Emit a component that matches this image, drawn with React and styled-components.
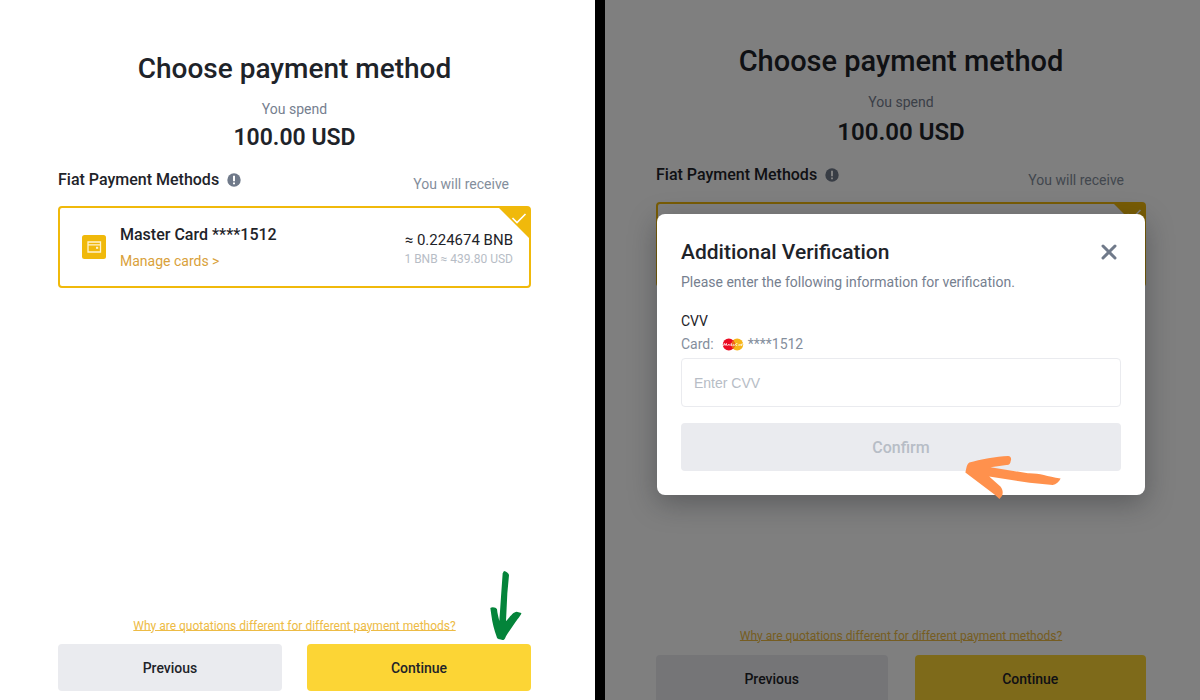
import { useState } from 'react';
import styled, { createGlobalStyle } from 'styled-components';

const GlobalStyle = createGlobalStyle`
  * {
    box-sizing: border-box;
  }
  body {
    margin: 0;
    background: #fff;
    font-family: Roboto, 'Liberation Sans', sans-serif;
    font-size: 14px;
    line-height: 20px;
    color: #1e2329;
  }
  h1, h2, h3, p {
    margin: 0;
  }
  button, input {
    font-family: inherit;
  }
`;

const Page = styled.div`
  display: grid;
  grid-template-columns: 1fr 10px 1fr;
  height: 100vh;
  overflow: hidden;
`;

const Divider = styled.div`
  background: #000;
`;

const Panel = styled.section`
  position: relative;
  min-width: 0;
  overflow: hidden;
`;

const Content = styled.div`
  padding: ${({ $large }) => ($large ? '43px 54px 0 51px' : '51px 64px 0 58px')};
`;

const Title = styled.h1`
  text-align: center;
  font-size: ${({ $large }) => ($large ? '29px' : '28px')};
  line-height: 36px;
  font-weight: 500;
`;

const SpendLabel = styled.p`
  margin-top: ${({ $large }) => ($large ? '13px' : '12px')};
  text-align: center;
  color: #76808f;
`;

const Amount = styled.p`
  margin-top: ${({ $large }) => ($large ? '5px' : '4px')};
  text-align: center;
  font-size: ${({ $large }) => ($large ? '24px' : '23px')};
  line-height: 30px;
  font-weight: 600;
`;

const MethodsRow = styled.div`
  display: flex;
  justify-content: space-between;
  height: 28px;
  margin-top: ${({ $large }) => ($large ? '15px' : '13px')};
`;

const MethodsTitle = styled.h2`
  display: flex;
  align-items: center;
  gap: 8px;
  height: ${({ $large }) => ($large ? '26px' : '28px')};
  font-size: 16px;
  font-weight: 500;
`;

const Receive = styled.span`
  align-self: flex-end;
  padding-right: 22px;
  color: #848e9c;
`;

const Method = styled.div`
  position: relative;
  display: flex;
  align-items: center;
  gap: 14px;
  height: ${({ $large }) => ($large ? '85px' : '82px')};
  margin-top: 12px;
  padding: 0 16px 0 22px;
  border: 2px solid #f0b90b;
  border-radius: 4px;
`;

const MethodInfo = styled.div`
  flex: 1;
`;

const MethodName = styled.h3`
  font-size: 16px;
  line-height: 24px;
  font-weight: 500;
`;

const ManageLink = styled.a`
  display: block;
  margin-top: 4px;
  color: #d9a13a;
  text-decoration: none;
`;

const MethodPrice = styled.div`
  padding-top: 4px;
  text-align: right;
  font-size: 15px;
  line-height: 20px;
`;

const Rate = styled.p`
  font-size: 12px;
  line-height: 18px;
  color: #b7bdc6;
`;

const Selected = styled.svg`
  position: absolute;
  top: -1px;
  right: -1px;
`;

const HelpLink = styled.a`
  display: block;
  margin-top: ${({ $large }) => ($large ? '339px' : '328px')};
  text-align: center;
  font-size: 12px;
  color: #edbb45;
  text-decoration: underline;
  text-underline-offset: 0;
`;

const Actions = styled.div`
  position: relative;
  display: grid;
  grid-template-columns: 1fr 1fr;
  gap: ${({ $large }) => ($large ? '27px' : '25px')};
  margin-top: ${({ $large }) => ($large ? '9px' : '8px')};
`;

const Button = styled.button`
  height: ${({ $large }) => ($large ? '48px' : '47px')};
  border: none;
  border-radius: 4px;
  background: ${({ $primary }) => ($primary ? '#fcd535' : '#eaebef')};
  color: #1e2329;
  font-size: 14px;
  font-weight: 500;
`;

const Overlay = styled.div`
  position: absolute;
  inset: 0;
  padding: 214px 55px 0 52px;
  background: rgba(0, 0, 0, 0.5);
`;

const Modal = styled.div`
  padding: 24px;
  border-radius: 8px;
  background: #fff;
  box-shadow: 0 8px 28px rgba(24, 26, 32, 0.35);
`;

const ModalHeader = styled.div`
  display: flex;
  align-items: center;
  justify-content: space-between;
  height: 28px;
`;

const ModalTitle = styled.h2`
  font-size: 21px;
  line-height: 28px;
  font-weight: 500;
`;

const CloseButton = styled.button`
  display: flex;
  padding: 4px;
  border: none;
  background: none;
`;

const ModalText = styled.p`
  margin-top: 6px;
  color: #76808f;
`;

const CvvLabel = styled.label`
  display: block;
  margin-top: 19px;
`;

const CardRow = styled.div`
  display: flex;
  align-items: center;
  margin-top: 3px;
  color: #848e9c;

  svg {
    margin: 0 4px 0 8px;
  }
`;

const CvvInput = styled.input`
  display: block;
  width: 100%;
  height: 49px;
  margin-top: 4px;
  padding: 0 12px;
  border: 1px solid #eaebef;
  border-radius: 4px;
  font-family: 'Liberation Sans', Arial, sans-serif;
  font-size: 14px;
  color: #1e2329;

  &::placeholder {
    color: #b7bdc6;
  }
`;

const ConfirmRow = styled.div`
  position: relative;
  margin-top: 16px;
`;

const ConfirmButton = styled.button`
  display: block;
  width: 100%;
  height: 48px;
  border: none;
  border-radius: 4px;
  background: #eaebef;
  color: #b7bdc6;
  font-size: 16px;
  font-weight: 500;
`;

const GreenPointer = styled.svg`
  position: absolute;
  right: 9px;
  bottom: 51px;
`;

const OrangePointer = styled.svg`
  position: absolute;
  top: 33px;
  right: 60px;
`;

const InfoIcon = () => (
  <svg width="14" height="14" viewBox="0 0 14 14">
    <circle cx="7" cy="7" r="6.7" fill="#707a8a" />
    <path d="M6 2.8h2v5.4H6zM6 9.4h2v1.9H6z" fill="#fff" />
  </svg>
);

const WalletIcon = () => (
  <svg width="24" height="24" viewBox="0 0 24 24">
    <rect width="24" height="24" rx="2.5" fill="#f0b90b" />
    <path d="M6 7h12.5v10H6zM6 9.8h12.5" fill="none" stroke="#fff3cf" strokeWidth="1.3" />
    <path d="M14 11.8h2.2v2H14z" fill="#fff3cf" />
  </svg>
);

const MasterCardIcon = () => (
  <svg width="22" height="13" viewBox="0 0 22 13">
    <circle cx="15.2" cy="6.5" r="6" fill="#f6b519" />
    <circle cx="6.8" cy="6.5" r="6" fill="#eb0b23" />
    <path d="M11 2.3a6 6 0 0 1 0 8.4a6 6 0 0 1 0-8.4z" fill="#ee6a1e" />
    <path
      d="M1.5 7.8l.8-2.4.9 2 1.2-2 .3 2.2M5.5 7.6l1.1-1.3.4 1.3M8.6 6.2l-1 .5.8.9M9.5 5.3l-.2 2.3 1-.2M11.8 6.4l-1 .8.9.5M12.6 7.7l.4-1.3M15.4 5.6c-2-.6-2.2 2-.3 2M16.3 7.5l.9-1.1.2 1.2M18.3 7.5l.4-1.2M20.3 5.3l-.5 2.2-.8-.3.6-.9"
      fill="none"
      stroke="#fff"
      strokeWidth="0.8"
    />
  </svg>
);

const CloseIcon = () => (
  <svg width="16" height="16" viewBox="0 0 16 16">
    <path d="M2 2l12 12M14 2L2 14" stroke="#707a8a" strokeWidth="3" strokeLinecap="round" />
  </svg>
);

const PaymentContent = ({ large }) => (
  <Content $large={large}>
    <Title $large={large}>Choose payment method</Title>
    <SpendLabel $large={large}>You spend</SpendLabel>
    <Amount $large={large}>100.00 USD</Amount>
    <MethodsRow $large={large}>
      <MethodsTitle $large={large}>
        Fiat Payment Methods
        <InfoIcon />
      </MethodsTitle>
      <Receive>You will receive</Receive>
    </MethodsRow>
    <Method $large={large}>
      {/* the dialog covers the card details in the large panel */}
      {!large && (
        <>
          <WalletIcon />
          <MethodInfo>
            <MethodName>Master Card ****1512</MethodName>
            <ManageLink href="#cards">Manage cards &gt;</ManageLink>
          </MethodInfo>
          <MethodPrice>
            ≈ 0.224674 BNB
            <Rate>1 BNB ≈ 439.80 USD</Rate>
          </MethodPrice>
        </>
      )}
      <Selected width="32" height="32" viewBox="0 0 32 32">
        <path d="M0 0h29a3 3 0 0 1 3 3v29z" fill="#f0b90b" />
        <path d="M14.5 11l4.5 4.5L27.5 7" fill="none" stroke="#fff" strokeWidth="1.6" />
      </Selected>
    </Method>
    <HelpLink href="#quotations" $large={large}>
      Why are quotations different for different payment methods?
    </HelpLink>
    <Actions $large={large}>
      <Button $large={large}>Previous</Button>
      <Button $large={large} $primary>
        Continue
      </Button>
      {!large && (
        <GreenPointer width="32" height="69" viewBox="571 33 94 207">
          <path
            d="M612 33C618 34 627 40 627 46L622 100L618 184C628 172 640 155 650 155L664 159C665 163 650 180 645 188L622 222C615 232 616 240 608 240C600 237 592 239 590 230C583 210 577 190 574 165L571 144C576 140 589 142 591 148C592 160 596 175 598 183L603 110L608 40Z"
            fill="#04843a"
          />
        </GreenPointer>
      )}
    </Actions>
  </Content>
);

const Verification = () => {
  const [cvv, setCvv] = useState('');

  return (
    <Overlay>
      <Modal role="dialog" aria-labelledby="verification-title">
        <ModalHeader>
          <ModalTitle id="verification-title">Additional Verification</ModalTitle>
          <CloseButton aria-label="Close">
            <CloseIcon />
          </CloseButton>
        </ModalHeader>
        <ModalText>Please enter the following information for verification.</ModalText>
        <CvvLabel htmlFor="cvv">CVV</CvvLabel>
        <CardRow>
          Card:
          <MasterCardIcon />
          ****1512
        </CardRow>
        <CvvInput
          id="cvv"
          placeholder="Enter CVV"
          value={cvv}
          onChange={(e) => setCvv(e.target.value)}
        />
        <ConfirmRow>
          <ConfirmButton disabled={!cvv}>Confirm</ConfirmButton>
          <OrangePointer width="96" height="43" viewBox="196 167 288 130">
            <path
              d="M196 217C199 205 200 192 208 187C240 177 290 169 325 167C334 168 336 175 333 182C332 190 328 195 320 194L272 201L385 219C420 218 440 228 484 235C480 245 470 252 460 255L390 248L268 229L302 259C310 268 310 280 307 287L299 297L285 284Z"
              fill="#ff914d"
            />
          </OrangePointer>
        </ConfirmRow>
      </Modal>
    </Overlay>
  );
};

const App = () => {
  return (
    <>
      <GlobalStyle />
      <Page>
        <Panel>
          <PaymentContent />
        </Panel>
        <Divider />
        <Panel>
          <PaymentContent large />
          <Verification />
        </Panel>
      </Page>
    </>
  );
};

export default App;
